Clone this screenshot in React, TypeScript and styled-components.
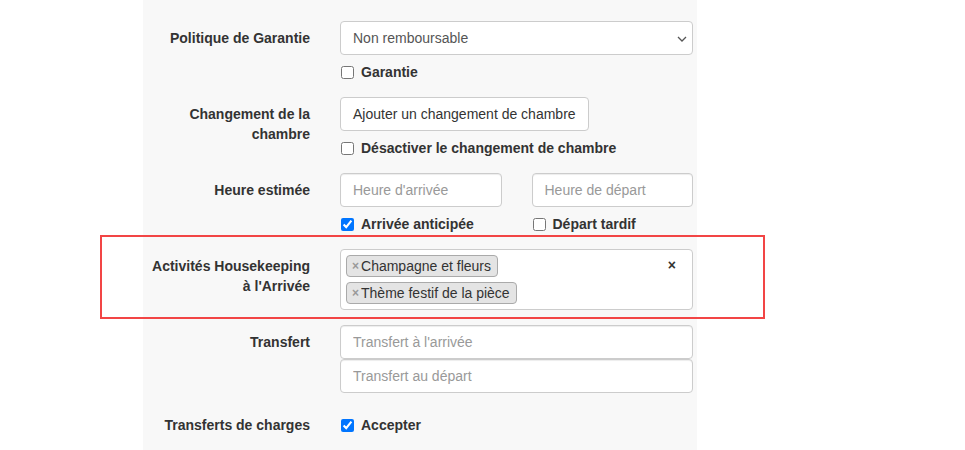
import styled, { createGlobalStyle } from "styled-components";

const GlobalStyle = createGlobalStyle`
  html, body {
    margin: 0;
    padding: 0;
    background: #ffffff;
    font-family: "Liberation Sans", Arial, sans-serif;
    font-size: 14px;
    line-height: 20px;
    color: #333333;
  }
  * { box-sizing: border-box; }
`;

const Page = styled.div`
  height: 450px;
  overflow: hidden;
  padding-left: 143px;
`;

const Panel = styled.form`
  width: 554px;
  min-height: 450px;
  background: #f8f8f8;
  padding: 21px 4px 0 0;
`;

const Row = styled.div`
  position: relative;
  display: grid;
  grid-template-columns: 167px 353px;
  column-gap: 30px;
  margin-bottom: 15px;
`;

const Highlight = styled.div`
  position: absolute;
  top: -14px;
  left: -43px;
  width: 665px;
  height: 84px;
  border: 2px solid #f24545;
  pointer-events: none;
`;

const Label = styled.label`
  padding-top: 7px;
  text-align: right;
  font-weight: bold;
  color: #333;
`;

const Controls = styled.div`
  display: flex;
  flex-direction: column;
`;

const Pair = styled.div`
  display: grid;
  grid-template-columns: 1fr 1fr;
  column-gap: 30px;
`;

const Field = styled.input`
  display: block;
  width: 100%;
  height: 34px;
  padding: 6px 12px;
  font: inherit;
  color: #555;
  background: #fff;
  border: 1px solid #ccc;
  border-radius: 4px;
  box-shadow: inset 0 1px 1px rgba(0, 0, 0, 0.075);
  &::placeholder { color: #999; }
`;

const SelectWrap = styled.div`
  position: relative;
  svg {
    position: absolute;
    right: 6px;
    top: 15px;
    pointer-events: none;
  }
`;

const Select = styled.select`
  display: block;
  width: 100%;
  height: 34px;
  padding: 6px 28px 6px 12px;
  font: inherit;
  color: #555;
  background: #fff;
  border: 1px solid #ccc;
  border-radius: 4px;
  appearance: none;
  -webkit-appearance: none;
`;

const Button = styled.button`
  align-self: flex-start;
  height: 34px;
  padding: 6px 12px;
  font: inherit;
  color: #333;
  background: #fff;
  border: 1px solid #ccc;
  border-radius: 4px;
`;

const Check = styled.label`
  display: flex;
  align-items: center;
  gap: 7px;
  margin-top: 7px;
  font-weight: bold;
  color: #333;
  input {
    width: 13px;
    height: 13px;
    margin: 0 0 0 1px;
  }
`;

const Multi = styled.div`
  display: flex;
  align-items: flex-start;
  height: 61px;
  padding: 0 5px 5px;
  background: #fff;
  border: 1px solid #ccc;
  border-radius: 4px;
`;

const Tags = styled.div`
  flex: 1;
  display: flex;
  flex-direction: column;
  align-items: flex-start;
`;

const Tag = styled.span`
  display: flex;
  align-items: center;
  height: 22px;
  margin-top: 5px;
  padding: 0 6px 0 5px;
  background: #e4e4e4;
  border: 1px solid #aaa;
  border-radius: 4px;
  color: #333;
  white-space: nowrap;
`;

const Remove = styled.span`
  margin-right: 2px;
  color: #999;
  font-weight: bold;
  font-size: 12px;
  line-height: 1;
`;

const Clear = styled.span`
  margin: 5px 11px 0 0;
  font-weight: bold;
  color: #333;
`;

export default function App() {
  return (
    <>
      <GlobalStyle />
      <Page>
        <Panel>
          <Row>
            <Label>Politique de Garantie</Label>
            <Controls>
              <SelectWrap>
                <Select defaultValue="nr">
                  <option value="nr">Non remboursable</option>
                </Select>
                <svg width="10" height="6" viewBox="0 0 10 6">
                  <path d="M1 1 L5 5 L9 1" fill="none" stroke="#555" strokeWidth="1.3" />
                </svg>
              </SelectWrap>
              <Check>
                <input type="checkbox" />
                Garantie
              </Check>
            </Controls>
          </Row>

          <Row>
            <Label>Changement de la chambre</Label>
            <Controls>
              <Button type="button">Ajouter un changement de chambre</Button>
              <Check>
                <input type="checkbox" />
                Désactiver le changement de chambre
              </Check>
            </Controls>
          </Row>

          <Row>
            <Label>Heure estimée</Label>
            <Controls>
              <Pair>
                <Field placeholder="Heure d'arrivée" />
                <Field placeholder="Heure de départ" />
              </Pair>
              <Pair>
                <Check>
                  <input type="checkbox" defaultChecked />
                  Arrivée anticipée
                </Check>
                <Check>
                  <input type="checkbox" />
                  Départ tardif
                </Check>
              </Pair>
            </Controls>
          </Row>

          <Row>
            <Highlight />
            <Label>Activités Housekeeping à l'Arrivée</Label>
            <Multi>
              <Tags>
                <Tag><Remove>×</Remove>Champagne et fleurs</Tag>
                <Tag><Remove>×</Remove>Thème festif de la pièce</Tag>
              </Tags>
              <Clear>×</Clear>
            </Multi>
          </Row>

          <Row>
            <Label>Transfert</Label>
            <Controls>
              <Field placeholder="Transfert à l'arrivée" />
              <Field placeholder="Transfert au départ" />
            </Controls>
          </Row>

          <Row>
            <Label>Transferts de charges</Label>
            <Controls>
              <Check>
                <input type="checkbox" defaultChecked />
                Accepter
              </Check>
            </Controls>
          </Row>
        </Panel>
      </Page>
    </>
  );
}
